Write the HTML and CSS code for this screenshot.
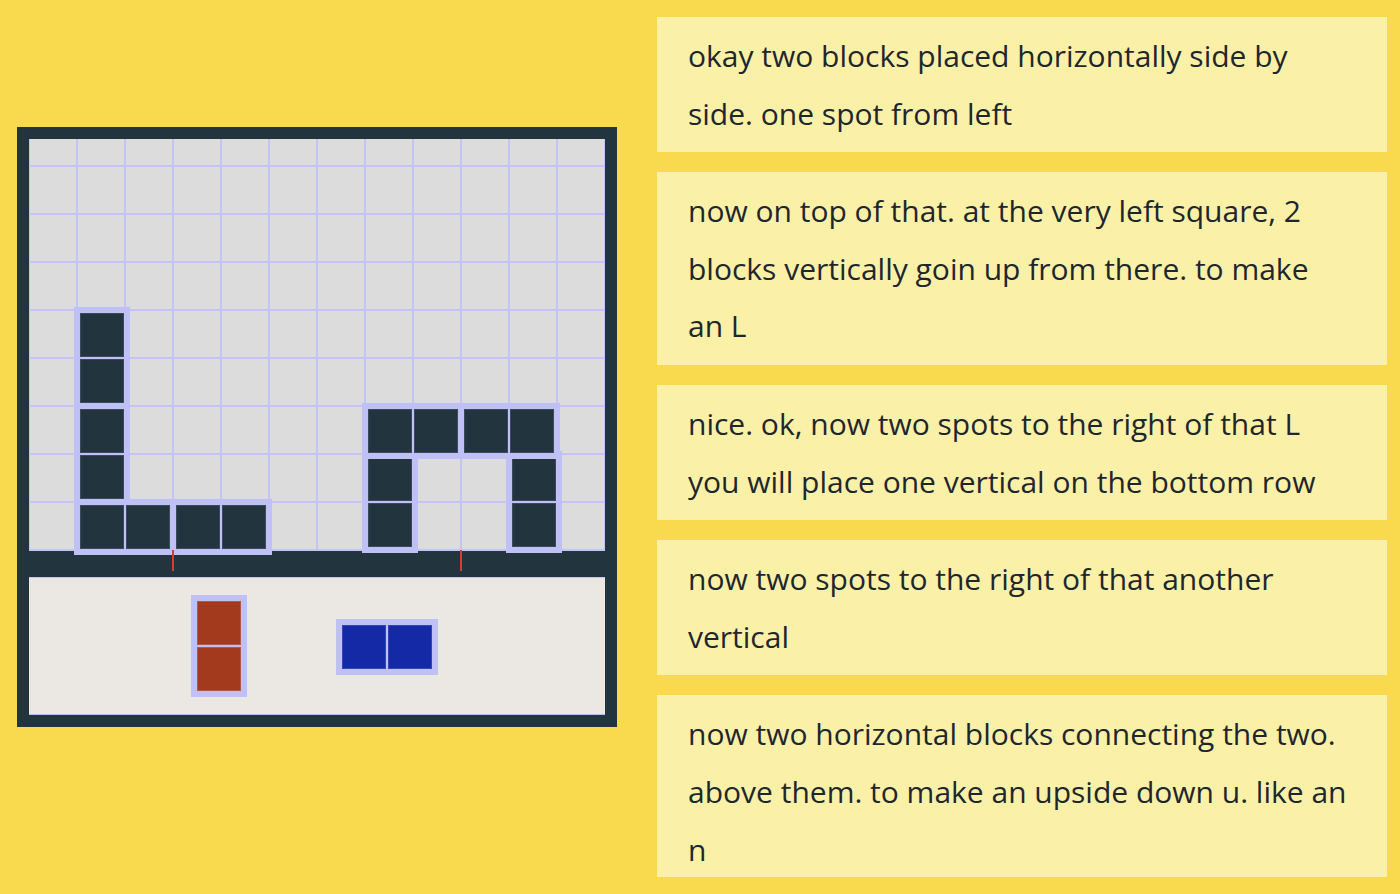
FILE: index.html
```html
<!DOCTYPE html>
<html>
<head>
<meta charset="utf-8">
<link rel="stylesheet" href="styles.css">
</head>
<body>
<div class="app">
  <div class="left">
    <div class="frame">
      <div class="grid">
        <div class="piece h" style="left:45px;top:360px"><i class="cell dark"></i><i class="cell dark"></i></div>
        <div class="piece h" style="left:141px;top:360px"><i class="cell dark"></i><i class="cell dark"></i></div>
        <div class="piece v" style="left:45px;top:264px"><i class="cell dark"></i><i class="cell dark"></i></div>
        <div class="piece v" style="left:45px;top:168px"><i class="cell dark"></i><i class="cell dark"></i></div>
        <div class="piece v" style="left:333px;top:312px"><i class="cell dark"></i><i class="cell dark"></i></div>
        <div class="piece v" style="left:477px;top:312px"><i class="cell dark"></i><i class="cell dark"></i></div>
        <div class="piece h" style="left:333px;top:264px"><i class="cell dark"></i><i class="cell dark"></i></div>
        <div class="piece h" style="left:429px;top:264px"><i class="cell dark"></i><i class="cell dark"></i></div>
      </div>
      <div class="bar">
        <span class="tick" style="left:143px"></span>
        <span class="tick" style="left:431px"></span>
      </div>
      <div class="tray">
        <div class="piece v" style="left:162px;top:18px"><i class="cell red"></i><i class="cell red"></i></div>
        <div class="piece h" style="left:307px;top:42px"><i class="cell blue"></i><i class="cell blue"></i></div>
      </div>
    </div>
  </div>
  <div class="right">
    <div class="msg">okay two blocks placed horizontally side by side. one spot from left</div>
    <div class="msg">now on top of that. at the very left square, 2 blocks vertically goin up from there. to make an L</div>
    <div class="msg">nice. ok, now two spots to the right of that L you will place one vertical on the bottom row</div>
    <div class="msg">now two spots to the right of that another vertical</div>
    <div class="msg">now two horizontal blocks connecting the two. above them. to make an upside down u. like an n</div>
  </div>
</div>
</body>
</html>
```

FILE: styles.css
```css
html, body {
  margin: 0;
  padding: 0;
  background: #f9da4f;
  font-family: "Open Sans", "Noto Sans", sans-serif;
  overflow: hidden;
}

.app {
  display: flex;
  align-items: flex-start;
  height: 100vh;
}

.left {
  padding: 127px 0 0 17px;
  flex: none;
}

.frame {
  width: 576px;
  padding: 12px;
  background: #22343e;
  display: flex;
  flex-direction: column;
}

.grid {
  position: relative;
  height: 412px;
  background-color: #dcdcdc;
  background-image:
    linear-gradient(to right, #c3c3f6 2px, transparent 2px),
    linear-gradient(to bottom, #c3c3f6 2px, transparent 2px);
  background-size: 48px 48px;
  background-position: -1px 26px;
}

.bar {
  position: relative;
  height: 26px;
}

.tick {
  position: absolute;
  top: -1px;
  width: 2px;
  height: 21px;
  background: #e2372a;
}

.tray {
  position: relative;
  height: 138px;
  background: #ebe8e4;
  box-shadow: inset 0 1px 0 #c9c7e2, inset 0 -1px 0 #bdbbee;
}

.piece {
  position: absolute;
  display: flex;
  gap: 2px;
  padding: 6px;
  background: #bfc0f6;
}

.piece.v {
  flex-direction: column;
}

.cell {
  display: block;
  width: 44px;
  height: 44px;
}

.cell.dark {
  background: #22343e;
  box-shadow: inset 0 0 0 1px #3d4a5e;
}

.cell.red {
  background: #a33a1e;
  box-shadow: inset 0 0 0 1px #b25a4a;
}

.cell.blue {
  background: #1429a6;
  box-shadow: inset 0 0 0 1px #3345b8;
}

.right {
  margin: 17px 13px 17px 40px;
  width: 730px;
  height: calc(100vh - 34px);
  overflow: hidden;
  display: flex;
  flex-direction: column;
  gap: 20px;
}

.msg {
  flex: none;
  background: #fbf0a8;
  color: #1f272e;
  font-size: 30px;
  line-height: 57.6px;
  padding: 10px 39px 10px 31px;
}
```
